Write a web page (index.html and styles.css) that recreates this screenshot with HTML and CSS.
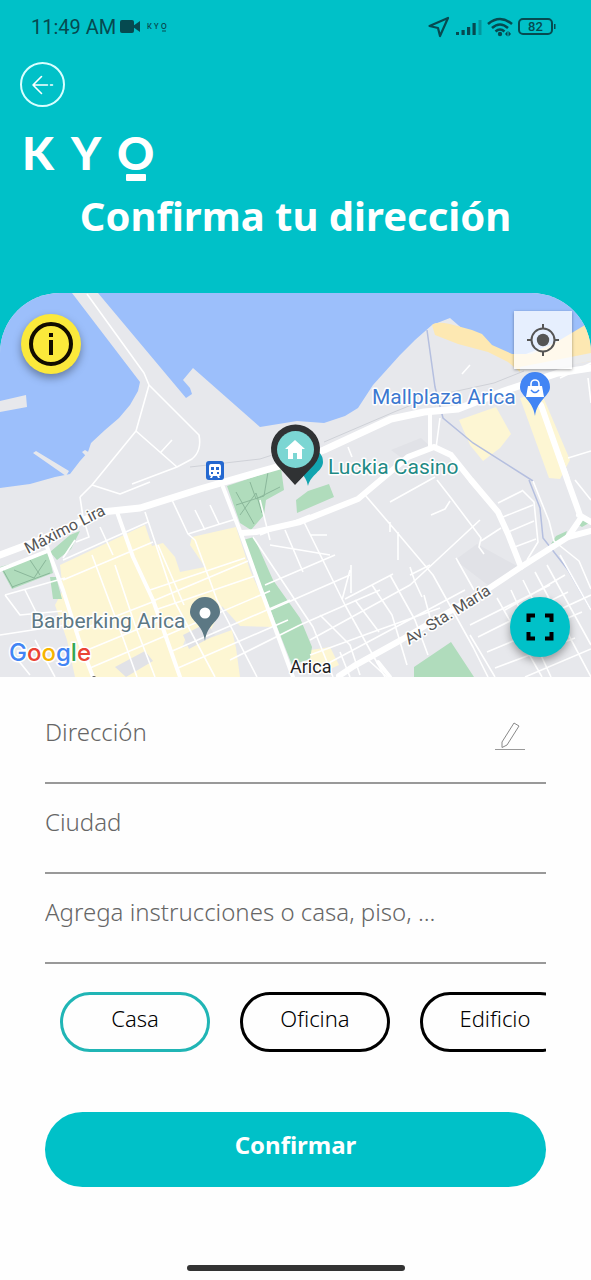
FILE: index.html
```html
<!DOCTYPE html>
<html lang="es">
<head>
	<meta charset="UTF-8">
	<meta name="viewport" content="width=device-width, initial-scale=1">
	<title>Confirma tu dirección</title>
	<link rel="stylesheet" href="styles.css">
</head>
<body>
	<header class="header">
		<div class="status">
			<span class="time">11:49 AM</span>
			<svg class="cam" width="20" height="14" viewBox="0 0 20 14"><rect width="14" height="13" rx="2"/><path d="M13 6l7-5v11l-7-5z"/></svg>
			<svg class="mini" width="21" height="9" viewBox="0 0 21 9"><text x="0" y="6">K</text><text x="7" y="6">Y</text><text x="14" y="6">O</text><path d="M15 7.500h4v1h-4z"/></svg>
			<div class="signals">
				<svg width="22" height="22" viewBox="0 0 22 22"><path d="M1.500 10L20 2 12 20l-2-8z" fill="none" stroke="#064a50" stroke-width="2.200" stroke-linejoin="round"/></svg>
				<svg width="27" height="18" viewBox="0 0 27 18"><path d="M1 14h3v3H1zM6.500 12h3.200v5H6.500zM12 9h3.200v8H12zM17.500 5h3.200v12h-3.200z"/><path d="M23.500 2h3v15h-3z" opacity=".35"/></svg>
				<svg width="26" height="20" viewBox="0 0 26 20"><g fill="none" stroke="#064a50" stroke-width="2.600"><path d="M1 7q12-10 24 0"/><path d="M5 11q8-7 16 0"/><path d="M8.500 14.500q4.500-4 9 0"/></g><circle cx="13" cy="17" r="2.200"/><path d="M18 17l2.500-3v5.500zM24 17l-2.500-3v5.500z"/></svg>
				<svg width="39" height="18" viewBox="0 0 39 18"><rect x="1" y="1" width="33" height="15" rx="4" fill="none" stroke="#064a50" stroke-width="2"/><path d="M36 6h1.500v5H36z"/><text class="level" x="17.500" y="13" text-anchor="middle">82</text></svg>
			</div>
		</div>
		<button class="back" type="button" aria-label="Volver">
			<svg width="24" height="20" viewBox="0 0 24 20"><path d="M10.500 1.500L2 10l8.500 8.500M2 10h14.500M19.500 10h2" fill="none" stroke="#fff" stroke-width="1.600" stroke-linecap="round" stroke-linejoin="round"/></svg>
		</button>
		<svg class="logo" width="144" height="62" viewBox="0 0 144 62" role="img" aria-label="KYO">
			<text x="2" y="49">K</text><text x="51" y="49">Y</text><text x="97" y="49">O</text>
			<rect x="106" y="53" width="20" height="7" rx="1"/>
		</svg>
		<h1>Confirma tu dirección</h1>
	</header>

	<div class="map">
		<svg class="canvas" viewBox="0 293 591 384">
			<rect y="293" width="591" height="384" fill="#e7e8ec"/>
			<!-- mar -->
			<g fill="#9cbffb">
				<path d="M0 293H72L140 382 138 391 130 405 119 418 105 430 91 443 88 452 80 461 70 474 55 477 30 484 0 488z"/>
				<path d="M98 293L186 398 192 394 190 388 183 380 193 368 260 427 297 421 324 423 345 416 358 408 373 385 400 355 415 340 432 325 450 318H591V293z"/>
				<path d="M450 318L591 318V330L515 358 480 344z"/>
			</g>
			<g fill="#e7e8ec">
				<path d="M0 401l26-6 1 12-27 5zM33 453l3-2 33 20-3 5zM82 452l3-2 5 3-3 4z"/>
			</g>
			<!-- playa y manzanas -->
			<path fill="#fde8b2" d="M432 325q4-4 18-1l22 6 10 4 10 11 20 9 20 0 28-14 25-15 6-2V361l-18 3-53 8-12-10-20-10-30-8-23-9z"/>
			<path fill="#eaebed" d="M520 367l71-14v8l-71 14z"/>
			<g fill="#fdf6d3">
				<path d="M60 565L145 525 152 546 163 543 175 557 180 572 205 567 190 545 192 537 236 527 250 570 275 627 240 626 222 606 210 632 185 640 182 648 232 630 236 648 240 677H75L67 640 55 605 63 590z"/>
				<path d="M459 420L496 407 511 434 500 448 483 461 470 445zM520 398L541 392 570 460 560 479 549 478zM311 650l19-3 9 18-18 8-13-10z"/>
			</g>
			<path fill="#e1e2e7" d="M391 450l30-12 10 9-28 12zM183 635l24-12 8 12-26 14zM115 667l30-16 8 10-27 16zM455 560l22-16 40 22-28 20z"/>
			<!-- parques -->
			<g fill="#b0dcbc">
				<path d="M227 486L281 468 284 490 266 500 264 515 251 530 240 523zM296 500l12-9 21-7 5 13-37 16zM50 552l20-17 10-4-9 18-14 11zM0 567l48-14 5 20-41 16zM50 577h6l6 22h-9z"/>
				<path d="M243 540l11-3 19 43 27 38 12 29-2 12-18 6zM414 667l37-25 23 35h-60zM551 544l5-8 11-5-3 9zM577 524l8-8 4 7-7 4z"/>
			</g>
			<path d="M236 492l18 32M236 505l28-9 4-24M240 515l16-22 6 20M250 482l6 17 24-12M3 570l10 18M12 587l38-14M14 570l20 8 12-18M30 560l10 15" fill="none" stroke="#8ab79a" stroke-width="1"/>
			<!-- río -->
			<path d="M427 330l8 57 8 31 30 25 60 38M529 480l11 28 3 30 25 32 23 40" fill="none" stroke="#b5bfdf" stroke-width="1.500"/>
			<path d="M190 467l70-8 40-13M324 442l70-30 40-16 60-13 30-12" fill="none" stroke="#cfd1d7" stroke-width="1"/>
			<!-- calles menores -->
			<g fill="none" stroke="#fff" stroke-width="1.600" stroke-linejoin="round">
				<path d="M87 294l57 79 5 12 50 50q3 16-7 24l-15 8-45 17M149 385l-13 46-44 54M136 431l41 36M161 452l11-12"/>
				<path d="M80 497l12-12 28 9 30-12M80 497l3 20 6 20-13 5M63 560l85-38M63 580l90-38M153 601l95-40M150 590l95-32M75 632l80-31M80 653l80-33M90 668l75-32M155 610l100-34M165 636l105-45M170 652l120-52M178 668l110-48M230 660l70-35"/>
				<path d="M145 512l30 90 40 75M172 500l16 34 48-15M195 540l22 60 40 77M188 534l7 6M158 545l26 60M115 565l20 60 20 52M92 555l30 80 15 42M75 540l-12 18M5 595l60-17M5 595l15 20 42-4M25 590l12 24M0 635l65-10M10 650l20 25M35 640l20 37M100 527l13 28M195 510l10 20M210 505l9 19"/>
				<path d="M253 537l60 90 20 50M260 535l50-20M270 545l60 10M285 530l18 42M265 585l70-30M270 610l80-35M300 625l80-35M310 640l100-55 70-65M325 665l140-75M310 655l60-22 70-25"/>
				<path d="M303 520l42 85 40 72M365 495l30 35 38 45 40 72 15 30M437 480l14 18 30 40-2 9 5 7M450 501l-5 8-14 6M481 541l20-13M390 502l45-25M398 532v28M390 522v10M310 535h17M350 570l-8 30M351 565v28M372 585l20 30 15 50M390 575l25 45 13 35M320 615l30 30 10 30M355 600l24 32M456 558l18 32M345 599l48-25M410 567l5 15 7 15M424 595l8 30M410 575l20-10"/>
				<path d="M498 503l24-12M503 517l30-12M508 532l26-11M512 548l24-9M522 490l12 12 4 40-11 18M533 481l16 40 5 20 25 20 12 28M575 480l16 20M568 458l23-7M561 456l8 22M462 374l8-9M440 418l-4 30M451 455l20 28M504 395l-40 13M560 378l31-15M588 378l3 25"/>
				<path d="M470 625l80-40M478 637l90-45M487 652l95-40M495 668l80-30M525 677l66-28M497 598l45 79M511 590l40 87M523 580l30 60M535 572l56 105M547 565l44 80M560 555l31 55M505 610l60-35M515 630l76-35M470 635l25 42M350 677l-10-25M365 657l22 20M348 447l4 10M270 540l-10-40"/>
			</g>
			<!-- avenidas -->
			<g fill="none" stroke="#fff" stroke-width="7" stroke-linecap="round" stroke-linejoin="round">
				<path d="M0 555l40-15 62-28 38-4 60-19 80-23 44-16 67-31 33-7 34-3 46-18 54-18 33-5"/>
				<path d="M242 533l14-1 44-10 58-23 50-42 26-10 17 8 20 25 27 32 10 22 13 33" stroke-width="6"/>
				<path d="M591 531l-23 6-47 30-33 22-87 51-47 26-15 10" stroke-width="6"/>
				<path d="M541 405l27 77 13 36-13 19M591 522l-12-7" stroke-width="6"/>
				<path d="M117 512l16 45 20 43 27 77M47 547l16 43 17 53 13 34M223 487l17 44 20 56 33 90M430 415v32M0 570l45-18M378 662l12 15" stroke-width="4"/>
			</g>
			<g class="place">
				<text class="blue" x="372" y="404">Mallplaza Arica</text>
				<text class="green" x="328" y="474">Luckia Casino</text>
				<text class="slate" x="31" y="628">Barberking Arica</text>
				<text class="city" x="290" y="673">Arica</text>
				<text class="road" transform="translate(28 554) rotate(-27)">Máximo Lira</text>
				<text class="road" transform="translate(409 645) rotate(-32)">Av. Sta. María</text>
			</g>
			<!-- pines -->
			<path fill="#4285f4" d="M535 416c-2-16-15-20-15-29a15 15 0 0 1 30 0c0 9-13 13-15 29z"/>
			<path fill="#fff" d="M528 386h14l2 11h-18z"/><path d="M531 386v-2a4 4 0 0 1 8 0v2" fill="none" stroke="#fff" stroke-width="1.600"/><path d="M531 390q4 5 8 0" fill="none" stroke="#4285f4" stroke-width="1.500"/>
			<path fill="#5c7884" d="M205 641c-2-17-15-20-15-29a15 15 0 0 1 30 0c0 9-13 12-15 29z"/><circle cx="205" cy="613" r="5.500" fill="#fff"/>
			<rect x="206" y="461" width="18" height="19" rx="3" fill="#2468d0"/>
			<path fill="#fff" d="M211 464h8q2 0 2 3v7q0 2-2 2l1 2h-2l-1-2h-4l-1 2h-2l1-2q-2 0-2-2v-7q0-3 2-3z"/><path fill="#2468d0" d="M211 467h3v3h-3zM216 467h3v3h-3zM211 472h2v2h-2zM217 472h2v2h-2z"/>
			<path fill="#12a4af" d="M308 486c-2-12-12-16-13-24a14 14 0 0 1 28 0c0 9-12 12-15 24z"/>
			<path fill="#303234" d="M295 485l-18-20a24.500 24.500 0 1 1 37 0z"/><circle cx="295.500" cy="449.500" r="18.500" fill="#7bd6d3"/>
			<path fill="#fff" d="M295 440l10 9h-3v10h-5v-6h-4v6h-5v-10h-3z"/>
			<path fill="#555" d="M92 677q2-2 4 0z"/>
			<text class="google" x="9" y="661"><tspan fill="#4285f4">G</tspan><tspan fill="#ea4335">o</tspan><tspan fill="#f6b400">o</tspan><tspan fill="#4285f4">g</tspan><tspan fill="#34a853">l</tspan><tspan fill="#ea4335">e</tspan></text>
		</svg>
		<button class="round info" type="button" aria-label="Información">
			<svg width="46" height="46" viewBox="0 0 46 46"><circle cx="23" cy="23" r="20" fill="none" stroke="#120c00" stroke-width="4"/><path d="M21 12h4v4h-4zM21 19h4v15h-4z" fill="#120c00"/></svg>
		</button>
		<button class="locate" type="button" aria-label="Mi ubicación">
			<svg width="32" height="32" viewBox="0 0 32 32"><circle cx="16" cy="16" r="11.500" fill="none" stroke="#555" stroke-width="2"/><circle cx="16" cy="16" r="6.200" fill="#555"/><path d="M16 0v5M16 27v5M0 16h5M27 16h5" stroke="#555" stroke-width="2"/></svg>
		</button>
		<button class="round full" type="button" aria-label="Pantalla completa">
			<svg width="28" height="28" viewBox="0 0 28 28"><path d="M2.500 9V2.500H9M19 2.500h6.500V9M25.500 19v6.500H19M9 25.500H2.500V19" fill="none" stroke="#000" stroke-width="4"/></svg>
		</button>
	</div>

	<form class="form">
		<div class="field">
			<input type="text" placeholder="Dirección" aria-label="Dirección">
			<svg class="pencil" width="32" height="40" viewBox="0 -8 32 40"><path d="M20 3l5 3-12 19-5 2.500 0-5.500z" fill="none" stroke="#888" stroke-width="1"/><path d="M1 29.500h30" stroke="#999"/></svg>
		</div>
		<div class="field"><input type="text" placeholder="Ciudad" aria-label="Ciudad"></div>
		<div class="field"><input type="text" placeholder="Agrega instrucciones o casa, piso, ..." aria-label="Instrucciones"></div>
		<div class="types">
			<button class="type active" type="button">Casa</button>
			<button class="type" type="button">Oficina</button>
			<button class="type" type="button">Edificio</button>
		</div>
		<button class="confirm" type="submit">Confirmar</button>
	</form>
	<div class="home"></div>
</body>
</html>
```
FILE: styles.css
```css
*{margin: 0;padding: 0;box-sizing: border-box;}
body{background: #fefefe;font-family: "Noto Sans", sans-serif;}
svg{display: block;flex: none;}
button{border: 0;cursor: pointer;font-family: inherit;}

.header{background: #00c1c8;padding-bottom: 44px;}
.status{display: flex;align-items: center;height: 54px;padding: 0 34px 0 31px;fill: #064a50;font-family: Roboto, sans-serif;}
.time{font-size: 20px;color: #064a50;}
.cam{margin: 0 7px 0 4px;}
.mini{font: 700 7px Lato, sans-serif;overflow: visible;}
.signals{display: flex;align-items: center;gap: 5px;margin-left: auto;}
.level{font: 500 13px Roboto, sans-serif;}
.back{display: flex;align-items: center;justify-content: center;width: 45px;height: 45px;margin: 8px 0 14px 20px;border: 2px solid #d8ffff;border-radius: 50%;background: none;}
.logo{margin-left: 20px;font: 900 46px Lato, sans-serif;fill: #fff;}
h1{font-size: 40px;line-height: 66px;font-weight: 700;color: #fff;text-align: center;}

.map{position: relative;background: #00c1c8;}
.canvas{width: 100%;height: auto;border-radius: 60px 60px 0 0;}
.place text{font: 21px Roboto, sans-serif;stroke: #fff;stroke-width: 3px;stroke-linejoin: round;paint-order: stroke;}
.place .blue{fill: #3c78d0;}
.place .green{fill: #1f8a85;}
.place .slate{fill: #5c7884;}
.place .city{font-size: 18px;fill: #222;}
.place .road{font-size: 16px;fill: #555;}
.google{font: 500 24px Inter, sans-serif;stroke: #fff;stroke-width: 3px;paint-order: stroke;}
.round{position: absolute;display: flex;align-items: center;justify-content: center;width: 60px;height: 60px;border-radius: 50%;box-shadow: 0 4px 8px rgba(0,0,0,.35);}
.info{left: 21px;top: 21px;background: #fbe93b;}
.full{right: 21px;bottom: 20px;background: #00c1c8;}
.locate{position: absolute;right: 19px;top: 18px;display: flex;align-items: center;justify-content: center;width: 58px;height: 58px;background: rgba(255,255,255,.75);box-shadow: 0 1px 3px rgba(0,0,0,.35);}

.form{padding: 17px 45px 0;}
.field{display: flex;align-items: center;height: 90px;padding: 0 20px 12px 0;border-bottom: 2px solid #999;}
.field input{flex: 1;min-width: 0;border: 0;outline: 0;background: none;font: 300 24px/36px "Noto Sans", sans-serif;color: #333;}
.field input::placeholder{color: #666;opacity: 1;}
.types{display: flex;gap: 30px;margin-top: 28px;padding-left: 15px;overflow: hidden;}
.type{flex: none;width: 150px;height: 60px;padding-bottom: 8px;border: 3px solid #000;border-radius: 30px;background: none;font-size: 22px;font-weight: 300;color: #000;}
.active{border-color: #20b5b5;}
.confirm{display: block;width: 100%;height: 75px;margin-top: 60px;padding-bottom: 10px;border-radius: 38px;background: #00c1c8;font-size: 24px;font-weight: 700;color: #fff;}
.home{width: 218px;height: 6px;margin: 78px auto 9px;border-radius: 3px;background: #333;}
```
